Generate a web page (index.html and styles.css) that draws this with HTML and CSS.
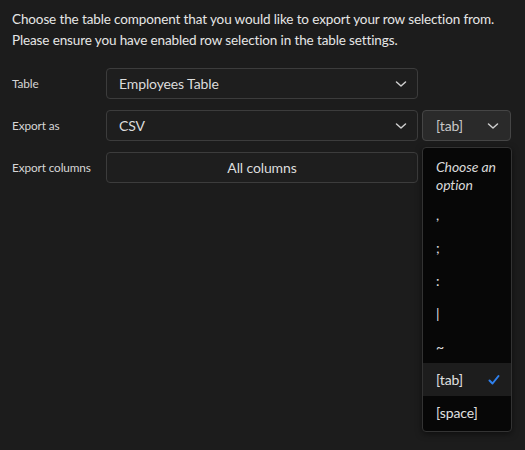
FILE: index.html
```html
<!DOCTYPE html>
<html>
<head>
<meta charset="utf-8">
<link rel="stylesheet" href="styles.css">
</head>
<body>
<div class="panel">
  <p class="intro">Choose the table component that you would like to export your row selection from. Please ensure you have enabled row selection in the table settings.</p>
  <div class="form">
    <div class="row">
      <div class="label">Table</div>
      <div class="select wide"><span>Employees Table</span><svg class="chev" viewBox="0 0 12 12"><path d="M1.5 4 L6 8 L10.5 4" /></svg></div>
    </div>
    <div class="row">
      <div class="label">Export as</div>
      <div class="select wide"><span>CSV</span><svg class="chev" viewBox="0 0 12 12"><path d="M1.5 4 L6 8 L10.5 4" /></svg></div>
      <div class="delim">
        <div class="select small open"><span>[tab]</span><svg class="chev" viewBox="0 0 12 12"><path d="M1.5 4 L6 8 L10.5 4" /></svg></div>
        <ul class="menu">
          <li class="placeholder">Choose an option</li>
          <li>,</li>
          <li>;</li>
          <li>:</li>
          <li>|</li>
          <li>~</li>
          <li class="selected">[tab]<svg class="check" viewBox="0 0 14 14"><path d="M2.5 7.5 L5.5 10.5 L11.5 3" /></svg></li>
          <li>[space]</li>
        </ul>
      </div>
    </div>
    <div class="row">
      <div class="label">Export columns</div>
      <div class="button wide">All columns</div>
    </div>
  </div>
</div>
</body>
</html>
```
FILE: styles.css
```css
html, body {
  margin: 0;
  padding: 0;
  background: #1c1c1c;
  height: 100%;
}
body {
  font-family: Lato, "Noto Sans", sans-serif;
  color: #e3e3e3;
  font-size: 14px;
  letter-spacing: -0.12px;
}
.panel {
  padding: 9px 12px;
}
.intro {
  margin: 0;
  line-height: 21px;
  font-size: 13.5px;
  color: #e6e6e6;
}
.form {
  margin-top: 17px;
  display: flex;
  flex-direction: column;
  gap: 11px;
}
.row {
  display: flex;
  align-items: center;
  gap: 4px;
  height: 31px;
}
.label {
  width: 90px;
  flex: none;
  font-size: 11.8px;
  color: #d6d6d6;
}
.select, .button {
  box-sizing: border-box;
  height: 31px;
  border: 1px solid #3c3c3c;
  border-radius: 4px;
  background: #1e1e1e;
  display: flex;
  align-items: center;
  font-size: 14px;
  color: #dcdcdc;
  flex: none;
}
.wide {
  width: 312px;
}
.select {
  justify-content: space-between;
  padding: 0 10px 0 12px;
}
.button {
  justify-content: center;
}
.chev {
  width: 12px;
  height: 12px;
  fill: none;
  stroke: #cfcfcf;
  stroke-width: 1.5;
  stroke-linecap: round;
  stroke-linejoin: round;
}
.delim {
  position: relative;
}
.small {
  width: 89px;
  background: #2a2a2a;
  border-color: #454545;
  color: #c8c8c8;
  padding: 0 11px 0 13px;
}
.menu {
  position: absolute;
  top: 37px;
  left: 0;
  width: 90px;
  box-sizing: border-box;
  margin: 0;
  padding: 3px 0 2px;
  list-style: none;
  background: #070707;
  border: 1px solid #333;
  border-radius: 4px;
  box-shadow: 0 2px 6px rgba(0,0,0,0.5);
}
.menu li {
  display: flex;
  align-items: center;
  justify-content: space-between;
  height: 33px;
  padding: 0 10px 0 13px;
  font-size: 14px;
  color: #e0e0e0;
}
.menu li.placeholder {
  height: auto;
  padding: 7px 12px 4px 13px;
  font-style: italic;
  line-height: 18px;
  color: #d8d8d8;
}
.menu li.selected {
  background: #1d1d1d;
}
.check {
  width: 14px;
  height: 14px;
  fill: none;
  stroke: #2f80ed;
  stroke-width: 2;
  stroke-linecap: round;
  stroke-linejoin: round;
}
```
